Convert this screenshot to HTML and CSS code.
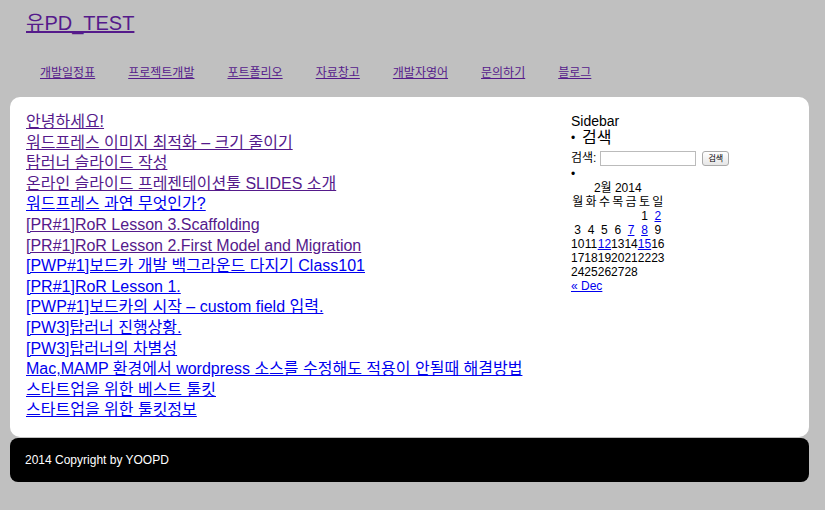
FILE: index.html
```html
<!DOCTYPE html>
<html lang="ko">
<head>
<meta charset="utf-8">
<title>유PD_TEST</title>
<link rel="stylesheet" href="styles.css">
</head>
<body>
<header class="site-header">
  <h1 class="site-title"><a class="visited" href="#">유PD_TEST</a></h1>
  <nav class="main-nav">
    <a class="visited" href="#">개발일정표</a>
    <a class="visited" href="#">프로젝트개발</a>
    <a class="visited" href="#">포트폴리오</a>
    <a class="visited" href="#">자료창고</a>
    <a class="visited" href="#">개발자영어</a>
    <a class="visited" href="#">문의하기</a>
    <a class="visited" href="#">블로그</a>
  </nav>
</header>
<div class="content-box">
  <main class="posts">
    <a class="post visited" href="#">안녕하세요!</a>
    <a class="post visited" href="#">워드프레스 이미지 최적화 – 크기 줄이기</a>
    <a class="post visited" href="#">탑러너 슬라이드 작성</a>
    <a class="post visited" href="#">온라인 슬라이드 프레젠테이션툴 SLIDES 소개</a>
    <a class="post" href="#">워드프레스 과연 무엇인가?</a>
    <a class="post visited" href="#">[PR#1]RoR Lesson 3.Scaffolding</a>
    <a class="post visited" href="#">[PR#1]RoR Lesson 2.First Model and Migration</a>
    <a class="post" href="#">[PWP#1]보드카 개발 백그라운드 다지기 Class101</a>
    <a class="post" href="#">[PR#1]RoR Lesson 1.</a>
    <a class="post" href="#">[PWP#1]보드카의 시작 – custom field 입력.</a>
    <a class="post" href="#">[PW3]탑러너 진행상황.</a>
    <a class="post" href="#">[PW3]탑러너의 차별성</a>
    <a class="post" href="#">Mac,MAMP 환경에서 wordpress 소스를 수정해도 적용이 안될때 해결방법</a>
    <a class="post" href="#">스타트업을 위한 베스트 툴킷</a>
    <a class="post" href="#">스타트업을 위한 툴킷정보</a>
  </main>
  <aside class="sidebar">
    <div class="sidebar-title">Sidebar</div>
    <ul class="widgets">
      <li class="widget">
        <div class="widget-head"><span class="widget-title">검색</span></div>
        <form class="search-form">
          <label class="search-label">검색:</label>
          <input class="search-input" type="text">
          <button class="search-btn" type="button">검색</button>
        </form>
      </li>
      <li class="widget">
        <div class="widget-head"></div>
        <table class="calendar">
          <caption>2월 2014</caption>
          <thead>
            <tr><th>월</th><th>화</th><th>수</th><th>목</th><th>금</th><th>토</th><th>일</th></tr>
          </thead>
          <tbody>
            <tr><td colspan="5"></td><td>1</td><td><a href="#">2</a></td></tr>
            <tr><td>3</td><td>4</td><td>5</td><td>6</td><td><a href="#">7</a></td><td><a href="#">8</a></td><td>9</td></tr>
            <tr><td>10</td><td>11</td><td><a href="#">12</a></td><td>13</td><td>14</td><td><a href="#">15</a></td><td>16</td></tr>
            <tr><td>17</td><td>18</td><td>19</td><td>20</td><td>21</td><td>22</td><td>23</td></tr>
            <tr><td>24</td><td>25</td><td>26</td><td>27</td><td>28</td><td colspan="2"></td></tr>
          </tbody>
          <tfoot>
            <tr><td colspan="7" class="prev"><a href="#">« Dec</a></td></tr>
          </tfoot>
        </table>
      </li>
    </ul>
  </aside>
</div>
<footer class="site-footer">2014 Copyright by YOOPD</footer>
</body>
</html>
```

FILE: styles.css
```css
html, body {
  margin: 0;
  padding: 0;
}
body {
  background: #c0c0c0;
  font-family: "Liberation Sans", Arial, "Noto Sans CJK KR", sans-serif;
  color: #000;
}
a {
  color: #0000ee;
  text-decoration: underline;
}
a.visited {
  color: #551a8b;
}
.site-header {
  padding: 12px 0 0 26px;
  height: 85px;
}
.site-title {
  margin: 0;
  font-size: 20px;
  font-weight: normal;
  line-height: 22px;
}
.main-nav {
  display: flex;
  gap: 33px;
  margin: 31px 0 0 14px;
  font-size: 12px;
  line-height: 16px;
}
.content-box {
  margin: 0 16px 0 10px;
  background: #fff;
  border-radius: 10px;
  padding: 15px 16px 16px 16px;
  display: flex;
}
.posts {
  flex: 1;
  display: flex;
  flex-direction: column;
  align-items: flex-start;
  font-size: 16px;
  line-height: 20.6px;
}
.sidebar {
  width: 222px;
  font-size: 12px;
  line-height: 14px;
}
.sidebar-title {
  font-size: 14px;
  line-height: 18px;
}
.widgets {
  margin: 0;
  padding: 0;
  list-style: none;
}
.widget-head {
  display: flex;
  align-items: center;
  min-height: 14px;
}
.widget-head::before {
  content: "•";
  display: inline-block;
  width: 11px;
  font-size: 12px;
}
.widget-title {
  font-size: 16px;
  line-height: 16px;
}
.search-form {
  display: flex;
  align-items: center;
  gap: 4px;
  margin: 4px 0 1px;
  height: 16px;
}
.search-input {
  width: 90px;
  height: 11px;
  padding: 1px 2px;
  border: 1px solid #bbb;
  margin: 0;
  font-size: 11px;
}
.search-btn {
  margin: 0 0 0 2px;
  height: 15px;
  padding: 0 5px;
  font-size: 8px;
  line-height: 12px;
  border: 1px solid #aaa;
  border-radius: 3px;
  background: linear-gradient(#fff, #e6e6e6);
  font-family: "Noto Sans CJK KR", sans-serif;
}
.calendar {
  border-collapse: collapse;
  border-spacing: 0;
  font-size: 12px;
  line-height: 14px;
}
.calendar caption {
  padding: 0;
}
.calendar th,
.calendar td {
  padding: 0;
  font-weight: normal;
  text-align: center;
}
.calendar td.prev {
  text-align: left;
}
.site-footer {
  margin: 1px 16px 0 10px;
  background: #000;
  color: #fff;
  border-radius: 8px;
  height: 44px;
  padding-left: 15px;
  font-size: 12px;
  line-height: 44px;
}
```
